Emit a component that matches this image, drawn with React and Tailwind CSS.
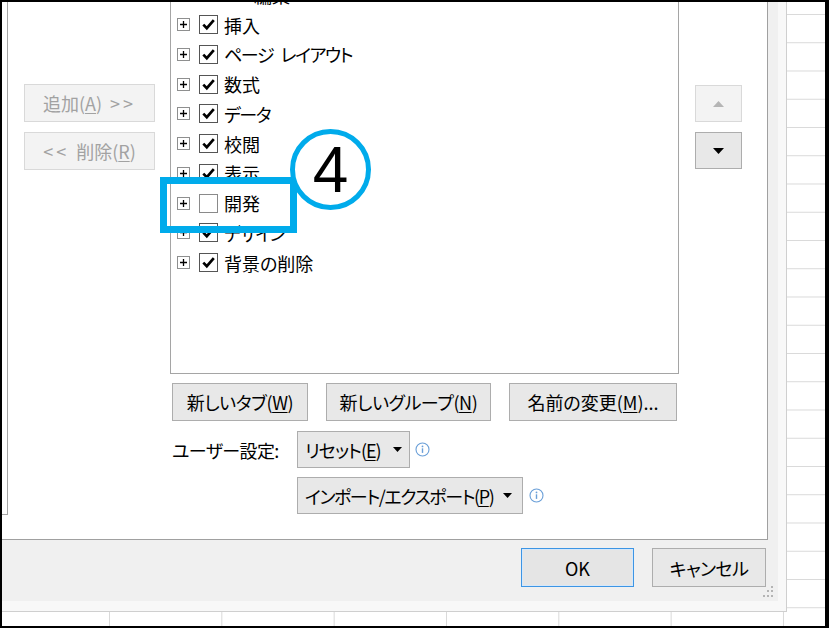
import React from "react";

const items = [
  { label: "挿入", on: true },
  { label: "ページ\u2002レイアウト", on: true, kana: true },
  { label: "数式", on: true },
  { label: "データ", on: true, kana: true },
  { label: "校閲", on: true },
  { label: "表示", on: true },
  { label: "開発", on: false },
  { label: "デザイン", on: true, kana: true },
  { label: "背景の削除", on: true },
];

const Expander = () => (
  <span className="flex h-[13px] w-[13px] shrink-0 items-center justify-center border border-[#8e8f8f] bg-white">
    <svg width="9" height="9" viewBox="0 0 9 9">
      <path d="M1 4.5h7M4.5 1v7" stroke="#000" strokeWidth="1.3" />
    </svg>
  </span>
);

const Check = ({ on }) => (
  <span
    className={`flex h-[19px] w-[19px] shrink-0 items-center justify-center border-[1.5px] bg-white ${
      on ? "border-[#555555]" : "border-[#8a8a8a]"
    }`}
  >
    {on && (
      <svg width="15" height="15" viewBox="0 0 15 15">
        <path d="M2.3 7.6 L5.8 11.2 L12.8 3.2" fill="none" stroke="#000" strokeWidth="2.7" />
      </svg>
    )}
  </span>
);

const Btn = ({ className = "", children }) => (
  <div
    className={`flex shrink-0 items-center justify-center whitespace-nowrap border border-[#adadad] bg-[#e8e8e8] text-[18px] leading-none text-black ${className}`}
  >
    {children}
  </div>
);

const Disabled = ({ children }) => (
  <div className="flex h-[38px] w-[131px] items-center justify-center whitespace-nowrap border border-[#d9d9d9] bg-[#f3f3f3] text-[18px] leading-none text-[#a2a2a2]">
    {children}
  </div>
);

const Caret = ({ color = "#000" }) => (
  <svg width="9" height="5" viewBox="0 0 9 5" className="shrink-0">
    <path d="M0 0h9L4.5 5z" fill={color} />
  </svg>
);

const Info = () => (
  <svg width="15" height="15" viewBox="0 0 15 15">
    <circle cx="7.5" cy="7.5" r="6.5" fill="#fff" stroke="#6a9fd8" strokeWidth="1.1" />
    <circle cx="7.5" cy="4.4" r="0.9" fill="#6a9fd8" />
    <path d="M7.5 6.3v4.6" stroke="#6a9fd8" strokeWidth="1.4" />
  </svg>
);

export default function App() {
  return (
    <div className="relative flex h-[628px] w-[829px] overflow-hidden bg-black pb-[2px] pl-[2px] pr-[4px] pt-[2px] font-['Noto_Sans_CJK_JP',sans-serif] [font-feature-settings:'palt']">
      {/* sheet grid behind the dialog */}
      <div className="relative flex-1 bg-white [background-image:linear-gradient(to_right,#d9d9d9_1px,transparent_1px),linear-gradient(to_bottom,#d9d9d9_1px,transparent_1px)] [background-position:107px_12px] [background-size:112.33px_28.25px]">
        {/* dialog */}
        <div className="absolute left-0 top-0 h-[610px] w-[785px] border-b border-r border-[#cfcfcf] bg-[#f8f8f8]">
          <div className="relative flex h-[599px] w-[776px] flex-col bg-[#f0f0f0]">
            <div className="flex h-[538px] w-[766px] items-start overflow-hidden border-b border-r border-[#a0a0a0] bg-white">
              {/* left list stub */}
              <div className="h-[513px] w-[6px] shrink-0 border-b border-r border-[#a5a5a5]" />

              {/* add / remove */}
              <div className="ml-[16px] mt-[82px] flex flex-col gap-[10px]">
                <Disabled>
                  追加(<u className="underline-offset-2">A</u>)
                  <span className="ml-[8px] tracking-[3px]">&gt;&gt;</span>
                </Disabled>
                <Disabled>
                  <span className="mr-[7px] tracking-[3px]">&lt;&lt;</span>
                  削除(<u className="underline-offset-2">R</u>)
                </Disabled>
              </div>

              {/* ribbon tree + controls */}
              <div className="ml-[15px] flex w-[509px] shrink-0 flex-col">
                <div className="h-[372px] overflow-hidden border-x border-b border-[#a5a5a5]">
                  <div className="-mt-[22px] text-[18px] leading-none text-black">
                    <div className="flex h-[29.75px] items-center pl-[60px]">
                      <Expander />
                      <span className="ml-[10px]">編集</span>
                    </div>
                    {items.map((it) => (
                      <div key={it.label} className="flex h-[29.75px] items-center pl-[6px]">
                        <Expander />
                        <span className="ml-[9px]">
                          <Check on={it.on} />
                        </span>
                        <span className={`ml-[6px] whitespace-pre ${it.kana ? "tracking-[-1.4px]" : ""}`}>
                          {it.label}
                        </span>
                      </div>
                    ))}
                  </div>
                </div>

                <div className="ml-[2px] mt-[9px] flex gap-[18px]">
                  <Btn className="h-[38px] w-[136px]">
                    <span className="tracking-[-0.4px]">
                      新しいタブ(<u className="underline-offset-2">W</u>)
                    </span>
                  </Btn>
                  <Btn className="h-[38px] w-[165px]">
                    <span className="tracking-[-0.4px]">
                      新しいグループ(<u className="underline-offset-2">N</u>)
                    </span>
                  </Btn>
                  <Btn className="h-[38px] w-[168px]">
                    名前の変更(<u className="underline-offset-2">M</u>)...
                  </Btn>
                </div>

                <div className="ml-[2px] mt-[10px] flex h-[37px] items-center">
                  <span className="w-[125px] text-[18px] leading-none tracking-[-0.6px] text-black">ユーザー設定:</span>
                  <Btn className="h-[37px] w-[113px] !justify-start gap-[12px] pl-[7px]">
                    <span className="tracking-[-1px]">
                      リセット(<u className="underline-offset-2">E</u>)
                    </span>
                    <Caret />
                  </Btn>
                  <span className="ml-[5px] flex">
                    <Info />
                  </span>
                </div>

                <div className="ml-[127px] mt-[9px] flex h-[37px] items-center">
                  <Btn className="h-[37px] w-[226px] !justify-start gap-[10px] pl-[7px]">
                    <span className="tracking-[-1.4px]">
                      インポート/エクスポート(<u className="underline-offset-2">P</u>)
                    </span>
                    <Caret />
                  </Btn>
                  <span className="ml-[6px] flex">
                    <Info />
                  </span>
                </div>
              </div>

              {/* move up / down */}
              <div className="ml-[16px] mt-[83px] flex flex-col gap-[10px]">
                <div className="flex h-[37px] w-[47px] items-center justify-center border border-[#d9d9d9] bg-[#f3f3f3]">
                  <svg width="11" height="6" viewBox="0 0 11 6">
                    <path d="M0 6h11L5.5 0z" fill="#b5b5b5" />
                  </svg>
                </div>
                <div className="flex h-[37px] w-[47px] items-center justify-center border border-[#adadad] bg-[#e8e8e8]">
                  <svg width="11" height="6" viewBox="0 0 11 6">
                    <path d="M0 0h11L5.5 6z" fill="#000" />
                  </svg>
                </div>
              </div>
            </div>

            {/* footer */}
            <div className="flex justify-end gap-[18px] pr-[12px] pt-[8px]">
              <Btn className="h-[39px] w-[113px] !border-[#3d95e4] !bg-[#e5e5e5] outline outline-1 -outline-offset-2 outline-[#d6e8fa]">
                OK
              </Btn>
              <Btn className="h-[39px] w-[114px]">
                <span className="tracking-[-0.6px]">キャンセル</span>
              </Btn>
            </div>

            {/* size grip */}
            <svg className="absolute bottom-[3px] right-[4px]" width="12" height="12" viewBox="0 0 12 12">
              <rect x="9" y="0" width="2" height="2" fill="#b4b4b4" />
              <rect x="5" y="4" width="2" height="2" fill="#b4b4b4" />
              <rect x="9" y="4" width="2" height="2" fill="#b4b4b4" />
              <rect x="1" y="9" width="2" height="2" fill="#b4b4b4" />
              <rect x="5" y="9" width="2" height="2" fill="#b4b4b4" />
              <rect x="9" y="9" width="2" height="2" fill="#b4b4b4" />
            </svg>
          </div>
        </div>
      </div>

      {/* annotation: highlight box and step number */}
      <div className="absolute left-[160px] top-[177px] h-[56px] w-[137px] border-[7px] border-[#00abeb]" />
      <div className="absolute left-[290px] top-[129px] flex h-[81px] w-[81px] items-center justify-center rounded-full border-[5px] border-[#00abeb] bg-white font-['Liberation_Sans',sans-serif] text-[64px] leading-none text-black">
        4
      </div>
    </div>
  );
}
